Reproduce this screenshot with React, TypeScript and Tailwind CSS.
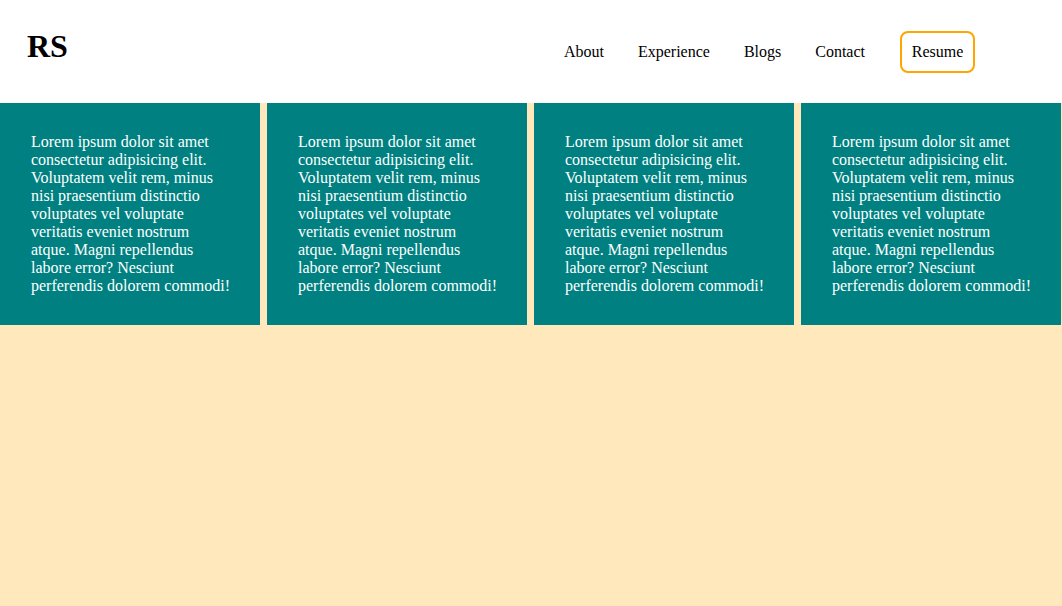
import React from 'react';

const lorem =
  'Lorem ipsum dolor sit amet consectetur adipisicing elit. Voluptatem velit rem, minus nisi praesentium distinctio voluptates vel voluptate veritatis eveniet nostrum atque. Magni repellendus labore error? Nesciunt perferendis dolorem commodi!';

const links = ['About', 'Experience', 'Blogs', 'Contact'];

export default function App() {
  return (
    <div className="min-h-[606px] bg-[#ffe8bc] font-['Liberation_Serif',serif] text-black">
      <header className="flex h-[103px] items-center bg-white pl-[27px] pr-[87px]">
        <h1 className="-mt-[12px] text-[32px] font-bold leading-none">RS</h1>
        <nav className="ml-auto flex items-center gap-[34px] text-[16px]">
          {links.map((l) => (
            <a key={l} href="#" className="leading-none">
              {l}
            </a>
          ))}
          <button className="ml-[1px] h-[42px] w-[75px] rounded-[8px] border-2 border-[#ffa500] text-[16px]">
            Resume
          </button>
        </nav>
      </header>
      <div className="flex gap-[7px]">
        {[0, 1, 2, 3].map((i) => (
          <div key={i} className="w-[260px] shrink-0 bg-[#008080] py-[30px] pl-[31px] pr-[29px] text-[16px] leading-[18px] text-white">
            <p>{lorem}</p>
          </div>
        ))}
      </div>
    </div>
  );
}
